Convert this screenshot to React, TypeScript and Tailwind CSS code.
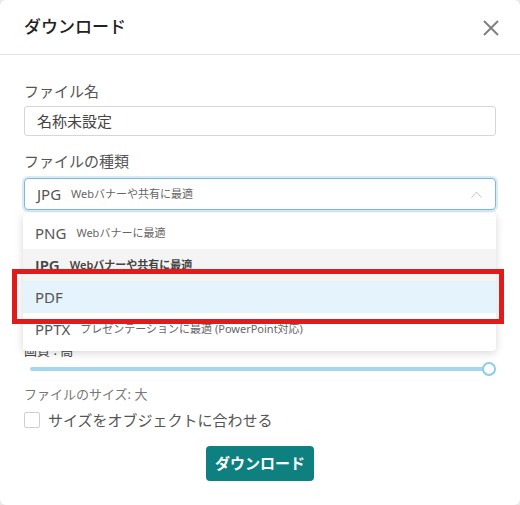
const font = { fontFamily: '"Noto Sans", "Noto Sans CJK JP", sans-serif' };

const options = [
  { key: "PNG", note: "Webバナーに最適" },
  { key: "JPG", note: "Webバナーや共有に最適" },
  { key: "PDF", note: "" },
  { key: "PPTX", note: "プレゼンテーションに最適 (PowerPoint対応)" },
];

function OptionRow({ k, note, state }: { k: string; note: string; state: "none" | "hover" | "active" }) {
  const bg = state === "active" ? "bg-[#f4f4f4]" : state === "hover" ? "bg-[#e5f4fc]" : "bg-white";
  const weight = state === "active" ? "font-semibold text-[#444]" : "text-[#555]";
  return (
    <div className={`flex h-[32px] items-center gap-[10px] px-3 ${bg}`}>
      <span className={`text-[15px] ${weight}`}>{k}</span>
      {note ? <span className={`text-[11px] ${state === "active" ? "font-semibold text-[#444]" : "text-[#666]"}`}>{note}</span> : null}
    </div>
  );
}

export default function App() {
  return (
    <div className="relative h-[505px] w-[520px] bg-[#e9e9e9]" style={font}>
      <div className="flex h-full w-full flex-col rounded-[6px] bg-white">
        {/* header */}
        <div className="flex h-[55px] shrink-0 items-center justify-between border-b border-[#e4e4e4] pl-6 pr-[21px]">
          <span className="text-[17px] font-medium text-[#222]">ダウンロード</span>
          <svg width="16" height="16" viewBox="0 0 16 16" className="mt-[1px]">
            <path d="M1 1 L15 15 M15 1 L1 15" stroke="#808080" strokeWidth="2" />
          </svg>
        </div>

        <div className="flex flex-col px-6 pt-[25px]">
          <label className="text-[15px] leading-[22px] text-[#555]">ファイル名</label>
          <div className="mt-1 flex h-[30px] items-center rounded-[3px] border border-[#d6d6d6] px-3 text-[15px] text-[#444]">
            名称未設定
          </div>

          <label className="mt-[14px] text-[15px] leading-[22px] text-[#555]">ファイルの種類</label>
          <div className="relative mt-[6px]">
            <div className="flex h-[32px] items-center gap-[10px] rounded-[4px] border border-[#7fb8dd] px-3 shadow-[0_0_0_2px_#d8ecf8]">
              <span className="text-[15px] text-[#555]">JPG</span>
              <span className="text-[11px] text-[#666]">Webバナーや共有に最適</span>
              <svg className="ml-auto mr-[1px]" width="11" height="7" viewBox="0 0 11 7" fill="none">
                <polyline points="0.5,6.5 5.5,1 10.5,6.5" stroke="#c4c4c4" strokeWidth="1" />
              </svg>
            </div>

            <div className="absolute left-[-1px] right-0 top-[35px] z-10 rounded-[4px] bg-white pb-[6px] pt-1 shadow-[0_2px_8px_rgba(0,0,0,0.16)]">
              <OptionRow k={options[0].key} note={options[0].note} state="none" />
              <OptionRow k={options[1].key} note={options[1].note} state="active" />
              <OptionRow k={options[2].key} note={options[2].note} state="hover" />
              <OptionRow k={options[3].key} note={options[3].note} state="none" />
            </div>
          </div>

          <label className="mt-[132px] text-[13px] leading-[16px] text-[#444]">画質 : 高</label>
          <div className="relative mt-[4px] flex h-[14px] items-center pl-[6px] pr-[1px]">
            <div className="h-[4px] flex-1 rounded-full bg-[#a6d6ef]" />
            <div className="absolute right-0 top-0 h-[14px] w-[14px] rounded-full border-2 border-[#8ccbeb] bg-white" />
          </div>

          <div className="mt-[9px] text-[13px] leading-[18px] text-[#777]">ファイルのサイズ: 大</div>

          <div className="mt-[6px] flex h-[22px] items-center gap-2">
            <div className="h-[16px] w-[16px] rounded-[2px] border border-[#cfcfcf] bg-white" />
            <span className="text-[15px] text-[#555]">サイズをオブジェクトに合わせる</span>
          </div>

          <div className="mt-[15px] flex justify-center">
            <button
              type="button"
              className="h-[35px] w-[108px] rounded-[4px] bg-[#0f8080] text-[15px] font-bold text-white"
            >
              ダウンロード
            </button>
          </div>
        </div>
      </div>

      {/* annotation */}
      <div className="absolute left-[12px] top-[269px] z-20 h-[55px] w-[492px] border-[5px] border-[#e01b1b]" />
    </div>
  );
}
